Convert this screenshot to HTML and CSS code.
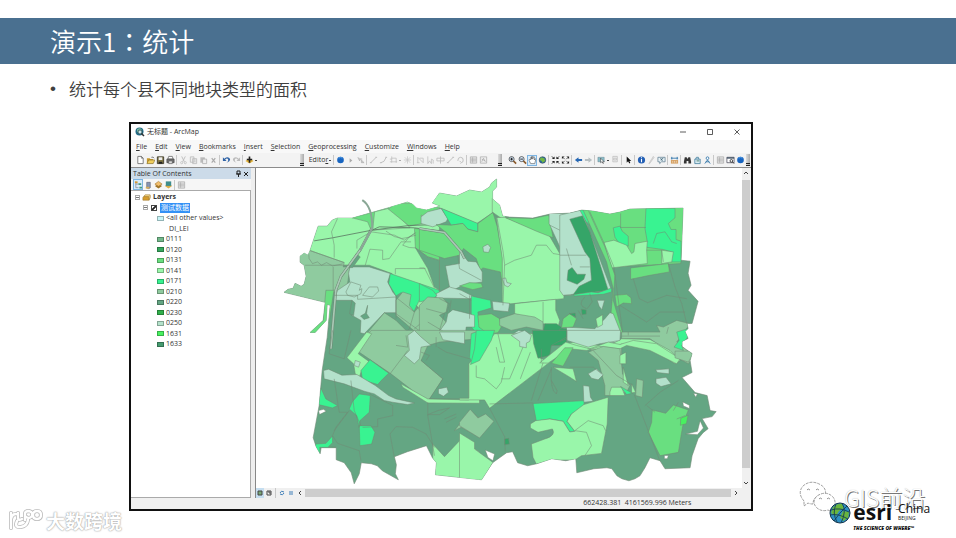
FILE: index.html
```html
<!DOCTYPE html>
<html lang="zh-CN">
<head>
<meta charset="utf-8">
<title>演示1：统计</title>
<link rel="stylesheet" href="styles.css">
</head>
<body>
<svg class="sprite" aria-hidden="true">
  <symbol id="page" viewBox="0 0 10 10"><path d="M2 1h4l2 2v6H2z" fill="#fff" stroke="#555" stroke-width=".8"/><path d="M6 1v2h2" fill="none" stroke="#555" stroke-width=".7"/></symbol>
  <symbol id="open" viewBox="0 0 10 10"><path d="M1 9V3h3l1 1h3v5z" fill="#c99a2c"/><path d="M1 9l2-4h7L8 9z" fill="#f0ce5d" stroke="#756229" stroke-width=".6"/><path d="M6 2q2-1 3 1" fill="none" stroke="#333" stroke-width=".7"/></symbol>
  <symbol id="save" viewBox="0 0 10 10"><path d="M1.5 1.5h7v7.5h-7z" fill="#817745" stroke="#3e3a2b"/><path d="M3 2h4v3H3z" fill="#eee"/><path d="M3 7h4v2H3z" fill="#222"/></symbol>
  <symbol id="print" viewBox="0 0 10 10"><path d="M3 1h4l1 3H2z" fill="#fff" stroke="#444" stroke-width=".7"/><path d="M1 4h8v4H1z" fill="#777" stroke="#333" stroke-width=".7"/><path d="M3 6h4v3H3z" fill="#ddd" stroke="#444" stroke-width=".6"/></symbol>
  <symbol id="cut" viewBox="0 0 10 10"><path d="M3 1l3 6M7 1L4 7" stroke="#bbb" fill="none"/><circle cx="3" cy="8" r="1.2" fill="none" stroke="#bbb" stroke-width=".8"/><circle cx="7" cy="8" r="1.2" fill="none" stroke="#bbb" stroke-width=".8"/></symbol>
  <symbol id="copy" viewBox="0 0 10 10"><path d="M1.500 1.500h4v6h-4zM4 3.500h4.500v5.500H4z" fill="#eee" stroke="#bbb" stroke-width=".9"/><path d="M5 5h3M5 7h3" stroke="#bbb" stroke-width=".6"/></symbol>
  <symbol id="paste" viewBox="0 0 10 10"><path d="M1.500 2h5v6h-5z" fill="#bbb"/><path d="M4 4h4.500v5H4z" fill="#eee" stroke="#aaa" stroke-width=".8"/></symbol>
  <symbol id="cross" viewBox="0 0 10 10"><path d="M3 3l4 5M7 3L3 8" stroke="#aaa" stroke-width="1.300"/></symbol>
  <symbol id="undo" viewBox="0 0 10 10"><path d="M1 2v4h4L3.500 4.500Q6 2 7 5q0 2-2 3 4-1 4-4Q7 0 2.500 3.500z" fill="#2e62a5"/></symbol>
  <symbol id="redo" viewBox="0 0 10 10"><path d="M9 2v4H5l1.500-1.500Q4 2 3 5q0 2 2 3-4-1-4-4Q3 0 7.500 3.500z" fill="#bbb"/></symbol>
  <symbol id="add" viewBox="0 0 10 10"><path d="M5 3l4.500 3L5 9 .5 6z" fill="#e7b639"/><path d="M5 1v7M2 4.500h6" stroke="#222" stroke-width="1.800"/></symbol>
  <symbol id="globe" viewBox="0 0 10 10"><circle cx="5" cy="5" r="3.700" fill="#1764c0"/><path d="M3 3q2-2 4 0" stroke="#5aa5ec" fill="none"/></symbol>
  <symbol id="earth" viewBox="0 0 10 10"><circle cx="5" cy="5" r="3.700" fill="#2c6aa3" stroke="#345" stroke-width=".6"/><path d="M3 2l4 1 1 3-3 2-1-2-2-1z" fill="#72b742"/></symbol>
  <symbol id="play" viewBox="0 0 10 10"><path d="M4 3l3 2.500L4 8z" fill="#aaa"/></symbol>
  <symbol id="vertex" viewBox="0 0 10 10"><path d="M2 2l2 4 1-2h2M6 5l3 3H6z" fill="#ccc" stroke="#aaa" stroke-width=".7"/></symbol>
  <symbol id="line" viewBox="0 0 10 10"><path d="M2 8l6-6M1 8h2M7 2h2" stroke="#bbb" fill="none"/></symbol>
  <symbol id="arc" viewBox="0 0 10 10"><path d="M2 8q4 0 6-6M1 8h2M7 2h2" stroke="#bbb" fill="none"/></symbol>
  <symbol id="trace" viewBox="0 0 10 10"><path d="M3 1v7M1 7h8M3 3h5v5M1 4h2" stroke="#bbb" fill="none" stroke-width=".8"/></symbol>
  <symbol id="star" viewBox="0 0 10 10"><path d="M5 1v8M1 5h8M2 2l6 6M8 2L2 8" stroke="#c5c5c5" stroke-width=".8"/></symbol>
  <symbol id="nodes" viewBox="0 0 10 10"><path d="M2 8V2l6 6V3H4M1 8h3" stroke="#bbb" fill="none" stroke-width=".8"/></symbol>
  <symbol id="bars" viewBox="0 0 10 10"><path d="M2 1v8l2-3 2 3V4l2 1v4" stroke="#bbb" fill="none" stroke-width=".8"/></symbol>
  <symbol id="split" viewBox="0 0 10 10"><path d="M5 1v8M1 3h8v3H1z" stroke="#bbb" fill="none" stroke-width=".9"/></symbol>
  <symbol id="turn" viewBox="0 0 10 10"><path d="M2 6q0-4 3-4t3 3-2 3M4 6l2 2-1 1" stroke="#bbb" fill="none"/></symbol>
  <symbol id="table" viewBox="0 0 10 10"><path d="M1.500 1.500h7v7h-7zM2 4h6M2 6h6M4 2v6" fill="#e3e3e3" stroke="#aaa" stroke-width=".8"/></symbol>
  <symbol id="sketch" viewBox="0 0 10 10"><path d="M1.500 1.500h7v7h-7zM3 7l2-4 2 4M3 4l4 2" fill="#eee" stroke="#aaa" stroke-width=".8"/></symbol>
  <symbol id="zin" viewBox="0 0 10 10"><path d="M6 6l3 3" stroke="#8b5a2b" stroke-width="1.800"/><circle cx="4" cy="4" r="2.800" fill="#def" stroke="#333" stroke-width=".8"/><path d="M2.500 4h3M4 2.500v3" stroke="#111"/></symbol>
  <symbol id="zout" viewBox="0 0 10 10"><path d="M6 6l3 3" stroke="#8b5a2b" stroke-width="1.800"/><circle cx="4" cy="4" r="2.800" fill="#def" stroke="#333" stroke-width=".8"/><path d="M2.500 4h3" stroke="#111"/></symbol>
  <symbol id="hand" viewBox="0 0 10 10"><path d="M3 9L1 5l1-1 1 1V2h1v2-3h1.200v3l.8-2.500h1V5l1-1.500.7.500L7.500 9z" fill="#fff" stroke="#444" stroke-width=".6"/></symbol>
  <symbol id="shrink" viewBox="0 0 10 10"><path d="M4 1v3H1zM6 1v3h3zM1 6h3v3zM6 9V6h3z" fill="#222"/><path d="M1 1l2 2M9 1L7 3M1 9l2-2M9 9L7 7" stroke="#222"/></symbol>
  <symbol id="expand" viewBox="0 0 10 10"><path d="M1 1h3L1 4zM9 1v3L6 1zM1 9V6l3 3zM9 9H6l3-3z" fill="#222"/><path d="M3 3l1 1M7 3L6 4M3 7l1-1M7 7L6 6" stroke="#222"/></symbol>
  <symbol id="back" viewBox="0 0 10 10"><path d="M1 5l4-3v2h4v2H5v2z" fill="#2768b4"/></symbol>
  <symbol id="fwd" viewBox="0 0 10 10"><path d="M9 5L5 2v2H1v2h4v2z" fill="#b7bfc2"/></symbol>
  <symbol id="select" viewBox="0 0 10 10"><path d="M1 2h7v5H1z" fill="#8bbfc9" stroke="#467" stroke-width=".4"/><path d="M4 3l4 4H6l1 2-2-2-1 1z" fill="#fff" stroke="#333" stroke-width=".6"/></symbol>
  <symbol id="clear" viewBox="0 0 10 10"><path d="M2 1h5v6H2zM3 3h3v2H3z" fill="#eee" stroke="#bbb" stroke-width=".8"/></symbol>
  <symbol id="arrow" viewBox="0 0 10 10"><path d="M3 1v7l1.500-1.500L6 9l1-1-1-2h2z" fill="#111"/></symbol>
  <symbol id="info" viewBox="0 0 10 10"><circle cx="5" cy="5" r="4" fill="#2460b5"/><path d="M5 4v3.500M5 2v1" stroke="#fff" stroke-width="1.200"/></symbol>
  <symbol id="pen" viewBox="0 0 10 10"><path d="M2 9l5-8 1 1-5 7z" fill="#ddd" stroke="#bbb" stroke-width=".6"/></symbol>
  <symbol id="popup" viewBox="0 0 10 10"><path d="M1 2h8v5H5L3 9V7H1z" fill="#e6f1f6" stroke="#5c7b8d" stroke-width=".8"/><path d="M4 5l3-2M4 3l2 3" stroke="#467"/></symbol>
  <symbol id="measure" viewBox="0 0 10 10"><path d="M1 5h8v4H1z" fill="#d6a264"/><path d="M1 3h8M2 1.500v3M8 1.500v3" stroke="#3478ae"/><path d="M3 6v2M5 6v2M7 6v2" stroke="#fff" stroke-width=".5"/></symbol>
  <symbol id="find" viewBox="0 0 10 10"><path d="M2 2h2l1 2 1-2h2l1 5v2H6V6H4v3H1V7z" fill="#343434"/></symbol>
  <symbol id="route" viewBox="0 0 10 10"><path d="M2 4h6v5H2zM3 4q0-3 3-2v2" fill="#d9ecf2" stroke="#467f9e" stroke-width=".9"/><path d="M4 6h3" stroke="#476"/></symbol>
  <symbol id="xy" viewBox="0 0 10 10"><circle cx="5" cy="3" r="1.500" fill="#fff" stroke="#397aad"/><path d="M2 9l3-4 3 4M3 7h4" fill="none" stroke="#397aad"/></symbol>
  <symbol id="viewer" viewBox="0 0 10 10"><path d="M1 2h8v6H1z" fill="#fff" stroke="#445" stroke-width=".8"/><path d="M1 2h8v1.500H1z" fill="#456"/><circle cx="6" cy="6" r="1.500" fill="none" stroke="#333"/><path d="M7 7l2 2" stroke="#333"/></symbol>
  <symbol id="layers" viewBox="0 0 10 10"><path d="M5 4l4 2-4 3-4-3z" fill="#9f7326"/><path d="M5 1l4 3-4 2.500L1 4z" fill="#f3bf6d" stroke="#a77930" stroke-width=".7"/></symbol>
  <symbol id="frame" viewBox="0 0 10 10"><path d="M1 5l2-2h6L8 8H1z" fill="#d79d2c" stroke="#97712b" stroke-width=".6"/><path d="M2 4l1.500-2H9v4L7.500 7V4z" fill="#f6d98a" stroke="#97712b" stroke-width=".6"/></symbol>
  <symbol id="tree" viewBox="0 0 10 10"><path d="M2 1v7h3M2 4h3" fill="none" stroke="#778" stroke-width=".7"/><path d="M1 1h3v2H1z" fill="#d79a34"/><path d="M5 3h3v2H5zM6 7h3v2H6z" fill="#479b80"/></symbol>
  <symbol id="drum" viewBox="0 0 10 10"><path d="M3 2h4v6q-2 2-4 0z" fill="#8796b4" stroke="#556" stroke-width=".6"/><path d="M2 7h4v2H2z" fill="#d7ad59"/></symbol>
  <symbol id="visible" viewBox="0 0 10 10"><path d="M5 3l4 3-4 3-4-3z" fill="#dcae48"/><path d="M2 1h6v5H2z" fill="#3e8d8d"/></symbol>
</svg>

<header class="banner"><h1>演示1<span class="colon" lang="zh-TW">：</span>统计</h1></header>
<ul class="points"><li>统计每个县不同地块类型的面积</li></ul>

<main class="stage">
  <div class="watermark">
    <svg viewBox="0 0 36 24" class="mark" aria-hidden="true"><g fill="none" stroke-linecap="round"><path d="M3 4v15M3 10q1-5 5-5M10 4v5q0 3 4 1M9 12q-3 7 4 6 6-1 7-7M17 11V5q0-3 4-3 4 1 3 5-3 4-7 0M25 6q0-4 4-4t4 4-4 4-4-4" stroke="#bbb" stroke-width="4"/><path d="M3 4v15M3 10q1-5 5-5M10 4v5q0 3 4 1M9 12q-3 7 4 6 6-1 7-7M17 11V5q0-3 4-3 4 1 3 5-3 4-7 0M25 6q0-4 4-4t4 4-4 4-4-4" stroke="#fff" stroke-width="2.400"/></g></svg>
    <span>大数跨境</span>
  </div>

  <section class="window">
    <div class="titlebar">
      <svg class="app" viewBox="0 0 10 10" aria-hidden="true"><circle cx="4.500" cy="4.500" r="4" fill="#246b87"/><path d="M2 2l3-1 2 2-2 3-3-1z" fill="#72b39c"/><circle cx="5" cy="5" r="2" fill="#cfe8ee" stroke="#244" stroke-width=".7"/><path d="M6.500 6.500L9 9" stroke="#333" stroke-width="1.500"/></svg>
      <span>无标题 - ArcMap</span>
      <div class="controls">
        <button aria-label="Minimize"><svg viewBox="0 0 8 8"><path d="M1 4h6" /></svg></button>
        <button aria-label="Maximize"><svg viewBox="0 0 8 8"><path d="M1.500 1.500h5v5h-5z"/></svg></button>
        <button aria-label="Close"><svg viewBox="0 0 8 8"><path d="M1.500 1.500l5 5M6.500 1.500l-5 5"/></svg></button>
      </div>
    </div>
    <nav class="menu">
      <button><u>F</u>ile</button><button><u>E</u>dit</button><button><u>V</u>iew</button><button><u>B</u>ookmarks</button><button><u>I</u>nsert</button><button><u>S</u>election</button><button><u>G</u>eoprocessing</button><button><u>C</u>ustomize</button><button><u>W</u>indows</button><button><u>H</u>elp</button>
    </nav>
    <div class="toolbars">
      <div class="bar">
        <button aria-label="New"><svg><use href="#page"/></svg></button><button aria-label="Open"><svg><use href="#open"/></svg></button><button aria-label="Save"><svg><use href="#save"/></svg></button><button aria-label="Print"><svg><use href="#print"/></svg></button><i></i>
        <button aria-label="Cut"><svg><use href="#cut"/></svg></button><button aria-label="Copy"><svg><use href="#copy"/></svg></button><button aria-label="Paste"><svg><use href="#paste"/></svg></button><button aria-label="Delete"><svg><use href="#cross"/></svg></button><i></i>
        <button aria-label="Undo"><svg><use href="#undo"/></svg></button><button aria-label="Redo"><svg><use href="#redo"/></svg></button><i></i>
        <button aria-label="Add data"><svg><use href="#add"/></svg></button><b class="drop"></b><b class="grip"></b>
      </div>
      <div class="bar">
        <button class="wide">Edito<u>r</u></button><b class="drop"></b><i></i>
        <button aria-label="Snap"><svg><use href="#globe"/></svg></button><button aria-label="Edit tool"><svg><use href="#play"/></svg></button><button aria-label="Vertex"><svg><use href="#vertex"/></svg></button><i></i>
        <button aria-label="Straight"><svg><use href="#line"/></svg></button><button aria-label="Arc"><svg><use href="#arc"/></svg></button><button aria-label="Trace"><svg><use href="#trace"/></svg></button><b class="drop pale"></b><button aria-label="Point"><svg><use href="#star"/></svg></button><i></i>
        <button aria-label="Nodes"><svg><use href="#nodes"/></svg></button><button aria-label="Reshape"><svg><use href="#bars"/></svg></button><button aria-label="Cut polygon"><svg><use href="#split"/></svg></button><button aria-label="Split"><svg><use href="#line"/></svg></button><button aria-label="Rotate"><svg><use href="#turn"/></svg></button><i></i>
        <button aria-label="Attributes"><svg><use href="#table"/></svg></button><button aria-label="Sketch"><svg><use href="#sketch"/></svg></button><b class="grip"></b>
      </div>
      <div class="bar">
        <button aria-label="Zoom in"><svg><use href="#zin"/></svg></button><button aria-label="Zoom out"><svg><use href="#zout"/></svg></button><button class="on" aria-label="Pan"><svg><use href="#hand"/></svg></button><button aria-label="Full extent"><svg><use href="#earth"/></svg></button><i></i>
        <button aria-label="Fixed zoom in"><svg><use href="#shrink"/></svg></button><button aria-label="Fixed zoom out"><svg><use href="#expand"/></svg></button><i></i>
        <button aria-label="Back"><svg><use href="#back"/></svg></button><button aria-label="Forward"><svg><use href="#fwd"/></svg></button><i></i>
        <button aria-label="Select features"><svg><use href="#select"/></svg></button><b class="drop"></b><button aria-label="Clear"><svg><use href="#clear"/></svg></button><i></i>
        <button aria-label="Select"><svg><use href="#arrow"/></svg></button><i></i>
        <button aria-label="Identify"><svg><use href="#info"/></svg></button><button aria-label="Hyperlink"><svg><use href="#pen"/></svg></button><button aria-label="Popup"><svg><use href="#popup"/></svg></button><i></i>
        <button aria-label="Measure"><svg><use href="#measure"/></svg></button><i></i>
        <button aria-label="Find"><svg><use href="#find"/></svg></button><button aria-label="Find route"><svg><use href="#route"/></svg></button><button aria-label="Go to XY"><svg><use href="#xy"/></svg></button><i></i>
        <button aria-label="Time"><svg><use href="#table"/></svg></button><button aria-label="Viewer"><svg><use href="#viewer"/></svg></button><button aria-label="Online"><svg><use href="#globe"/></svg></button><b class="grip"></b>
      </div>
    </div>
    <div class="work">
      <aside class="toc">
        <div class="tochead"><span>Table Of Contents</span><button aria-label="Pin"><svg viewBox="0 0 8 8"><path d="M3 1v3h3V1zM2 4h5M4.500 4v3"/></svg></button><button aria-label="Close panel"><svg viewBox="0 0 8 8"><path d="M2 2l4 4M6 2L2 6"/></svg></button></div>
        <div class="bar toctools"><button class="on" aria-label="By drawing order"><svg><use href="#tree"/></svg></button><button aria-label="By source"><svg><use href="#drum"/></svg></button><button aria-label="By visibility"><svg><use href="#layers"/></svg></button><button aria-label="By selection"><svg><use href="#visible"/></svg></button><i></i><button aria-label="Options"><svg><use href="#table"/></svg></button></div>
        <ul class="tree">
          <li><b class="fold"></b><svg class="ico"><use href="#frame"/></svg><strong>Layers</strong></li>
          <li class="l1"><b class="fold"></b><label><input type="checkbox" checked><mark>测试数据</mark></label></li>
          <li class="l2"><b class="sw other"></b>&lt;all other values&gt;</li>
          <li class="l2 field">DI_LEI</li>
          <li class="l2"><b class="sw c0111"></b>0111</li>
          <li class="l2"><b class="sw c0120"></b>0120</li>
          <li class="l2"><b class="sw c0131"></b>0131</li>
          <li class="l2"><b class="sw c0141"></b>0141</li>
          <li class="l2"><b class="sw c0171"></b>0171</li>
          <li class="l2"><b class="sw c0210"></b>0210</li>
          <li class="l2"><b class="sw c0220"></b>0220</li>
          <li class="l2"><b class="sw c0230"></b>0230</li>
          <li class="l2"><b class="sw c0250"></b>0250</li>
          <li class="l2"><b class="sw c1631"></b>1631</li>
          <li class="l2"><b class="sw c1633"></b>1633</li>
        </ul>
      </aside>
      <div class="view">
        <svg class="map" viewBox="257 168 485 319" role="img" aria-label="Layers">
          <defs><path id="extent" d="M285 292L289 289 294 288 296 283 302 286 305 284 307 276 305 265 301 262 301 256 305 253 309 255 311 250 319 226 328 226 333 220 338 218 353 218 388 208 408 202 413 204 417 208 427 210 441 206 433 203 440 193 457 196 470 190 482 192 490 187 492 183 497 179 497 187 493 191 493 199 500 205 503 216 510 217 533 218 550 214 570 213 582 210 593 211 610 214 620 212 630 209 683 208 681 260 690 261 688 273 691 285 688 290 698 301 692 323 687 323 688 328 685 331 688 338 682 341 682 346 686 349 692 353 690 360 692 372 682 377 695 392 707 395 710 410 716 411 712 416 702 418 708 428 703 432 698 438 692 455 690 467 665 468 660 460 650 457 645 467 640 475 635 478 629 480 622 478 617 475 612 468 607 467 594 468 577 472 576 458 566 460 552 458 537 463 528 465 518 462 513 451 507 452 493 462 482 479 436 474 437 462 433 457 427 445 408 451 395 456 397 464 396 473 399 479 383 470 378 465 372 463 362 462 360 473 355 483 352 472 345 462 337 459 337 447 322 447 321 453 317 446 314 437 320 405 323 370 328 337 331 305 328 304 327 320 316 332 311 332 324 320 326 302z"/><clipPath id="edge"><use href="#extent"/></clipPath></defs>
          <use href="#extent" class="k220"/>
          <g clip-path="url(#edge)">
          <g transform="translate(280 175) scale(.33333)">
            <path class="k141" d="M50 60h430v420L338 295 270 270H78L50 220z"/>
            <path class="k131" d="M218 128L327 100v60L275 164L265 140z"/>
            <path class="k141" d="M286 110L327 100Q365 125 392 158L280 165z"/>
            <path class="k131" d="M327 102L350 85H480V135L425 120 430 145 390 153z"/>
            <path class="k210" d="M90 225L195 262 192 275 212 275 205 325 180 350 165 350 138 385 0 385V200z"/>
            <path class="k250" d="M212 275H270L333 295 325 320 340 350 350 362V412L315 412 255 475 243 472 245 435 218 420V375L165 375 175 345 212 320 208 295z"/>
            <path class="k171" d="M333 295L480 345V362L445 375 423 368 403 410 385 400 390 365 365 352 350 362 328 325z"/>
            <path class="k131" d="M140 345H164L150 440 95 490 80 475 132 435z"/>
            <path class="k131" d="M405 160L480 166V255L445 245 408 218z"/>
            <path class="k220" d="M408 218L445 245 480 256V345L465 335 445 280z"/>
            <path class="k220" d="M231 235l12 10-23 32h-10z"/>
            <path class="k210" d="M315 412L350 435 400 485 480 500V510H240L262 475z"/>
            <path class="k210" d="M350 375L370 350 395 358 390 390 405 410 440 370 480 378V480L455 500 420 480 350 420z"/>
            <path class="road" d="M278 159L243 224L185 304L170 344L155 520"/>
            <path class="lane" d="M278 159L243 224L185 304L170 344L155 520"/>
            <path class="ln dark" d="M105 197L160 188L278 165L390 151L480 148M278 165L300 155L405 158L480 168"/>
            <path class="ln" d="M175 130L157 170L165 210V247M90 225L195 262M78 270H212M162 275V345M258 270L272 222L310 225V253L330 250L365 200H395M320 168Q370 210 410 172M410 180L390 185L370 210Q390 220 408 218M233 220V195L275 170L345 180L375 195L405 175M348 297V280H438M88 230L90 250L100 265L115 260L127 270L142 262L160 272L190 266M200 350L215 320L245 330L240 345L248 340L245 355L225 365L205 360zM250 360L270 335H295L298 347L280 365zM165 360H235V372L350 365M350 362V430M355 370L405 410L390 460L370 480L430 510M410 390L440 430L405 460M440 440L480 420M350 415L480 510M360 480L330 510"/>
            <path class="k220" d="M218 375l10 8-5 38-12-6zM265 390l-3 25 8 12-16 5-10-10 14-8z"/>
            <path class="k141" d="M262 470l-5 15-20 20-5 8h20z"/>
          </g>
          <g transform="translate(420 175) scale(.33333)">
            <path class="k141" d="M30 60L210 0H240L260 140L220 112 172 145 60 98 20 95z"/>
            <path class="k250" d="M5 125L25 110 65 100 85 130 80 140 40 155 5 145z"/>
            <path class="k171" d="M66 100L175 145V170L145 162 130 145 95 150z"/>
            <path class="k131" d="M0 163L75 168 50 148 95 150 130 145 145 162 175 170V145L220 112 233 155 250 250V340L242 290 190 278 182 285 170 250 132 220 120 240 75 250 0 225z"/>
            <path class="k141" d="M230 127H258L388 180 420 235 440 280 432 370 248 388V250z"/>
            <path class="k131" d="M258 128L340 130 388 120 400 188 350 168z"/>
            <path class="k250" d="M388 115H455V360H432L440 280 418 210 388 145z"/>
            <path class="k250" d="M120 225L145 258 170 260 188 290V320L130 330 100 345 60 350 90 335 78 272 120 265zM190 215l15-8 8 10-6 15-15-2zM248 310L258 308 262 322 275 325 265 335 255 330z"/>
            <path class="k131" d="M120 332l30-10 35 2 5 12-30 7z"/>
            <path class="k250" d="M50 355L90 335 125 345 165 365 150 370 50 368z"/>
            <path class="k171" d="M0 325L40 345 52 360 42 370 0 380zM155 362L213 375 215 398 175 410 178 440 210 470 230 475 220 510H180L178 480 155 455z"/>
            <path class="k210" d="M0 390L25 365 70 368 85 385 80 410 60 420 80 440 40 500 0 465z"/>
            <path class="k250" d="M85 415L100 403 148 415 165 420V455L140 455 135 500 60 490 58 470 80 440z"/>
            <path class="k131" d="M175 420L215 415 240 430 245 455 235 472 205 475 178 455z"/>
            <path class="k250" d="M218 378l52 6-4 25-45-4z"/>
            <path class="k141" d="M285 385L408 372V405L420 435 415 455 370 445 285 415z"/>
            <path class="k210" d="M240 430L285 415 345 425 370 440V465L320 455 275 465 240 450z"/>
            <path class="k120" d="M345 485L370 470 375 445 410 445 440 465V510H340z"/>
            <path class="k131" d="M425 440L450 415V460z"/>
            <path class="k120" d="M440 290h10v25l-10-5z"/>
            <path class="k141" d="M230 475H345V510H220z"/>
            <path class="k250" d="M272 480L297 465 322 470 337 490 317 510H295z"/>
            <path class="road" d="M0 160L75 172L125 230L135 250"/><path class="lane" d="M0 160L75 172L125 230L135 250"/>
            <path class="ln" d="M218 70V112L232 127L250 227L255 267L250 390M255 270L285 255L335 240L350 210H380L400 235L432 240M370 380V440M390 150L420 165H440V145H450M0 278H15L45 338M115 240L120 280L185 315M60 370L90 385L82 415M20 400L75 415L50 500M25 440L75 470M150 360V430M120 355L155 375M95 375L90 410"/>
          </g>
          <g transform="translate(560 195) scale(.33333)">
            <path class="k250" d="M0 60L65 45 155 285 10 300 0 285z"/>
            <path class="k131" d="M70 30H380L362 205 155 215z"/>
            <path class="k171" d="M60 45H78L90 90 78 78zM258 40H345V68L325 85 333 103H348V133L363 138V200H330L335 170 310 163 250 155 262 140 255 100zM160 98L180 93 187 108 205 123V153L180 148 165 126z"/>
            <path class="k141" d="M132 142L162 135 200 150 215 175 222 170 225 145 262 138 260 165 262 205 155 218zM305 165L340 170 335 200 305 205z"/>
            <path class="k120" d="M30 72L68 62 90 110 145 285 40 298 58 273 95 255 90 190 75 170z"/>
            <path class="k120" d="M25 225L37 217 52 237 77 237 72 252 52 267 22 255z"/>
            <path class="k131" d="M70 45H85L135 155 165 240 160 315 188 412H148L160 280 140 200z"/>
            <path class="k131" d="M212 218L325 205 328 230 270 240 212 252zM165 300L200 297 213 307 215 325 190 323 170 335z"/>
            <path class="k171" d="M40 298L95 290 115 292 155 278V290L130 297 45 302z"/>
            <path class="k250" d="M20 395L105 400 135 370 150 352 160 355 180 405V440L125 445 90 432 60 445 20 430zM112 315h22l-8 28-8-10z"/>
            <path class="k131" d="M10 370L30 355 50 370 40 395 5 397zM0 460L25 455 20 485 0 510z"/>
            <path class="k141" d="M108 370l20-12v30l-15 8z"/>
            <path class="k120" d="M0 400h20v30l-20 8zM28 355l18-2 2 12zM65 342l14 2 0 12-12 2z"/>
            <path class="k210" d="M185 410H300L290 390 310 395 350 375 390 385 350 440 400 480 385 505 340 480 270 430 185 430z"/>
            <path class="k171" d="M350 410L383 400V425L365 450 370 465 342 455 357 435z"/>
            <path class="k210" d="M90 460L185 450V510H130z"/>
            <path class="k141" d="M0 452L40 440 90 445 140 455 185 430 270 432 330 465 360 495 345 505 290 470 220 448 185 446 145 465 90 460 40 458 0 475z"/>
            <path class="ln" d="M90 50L132 142L162 215L188 410M182 55V97H258M325 205L345 275L365 325L380 385M220 250L238 310L263 322L320 300L380 310M180 330L260 380L300 350L375 350M55 345L70 370M75 305Q50 330 80 340M90 295L97 320L82 340M205 410V420M260 165H305L310 200M280 145L290 115L315 110L335 140L350 145M0 180H80M60 215H90M20 160L35 210M185 422H300M325 395L320 415"/>
          </g>
          <g transform="translate(280 330) scale(.33333)">
            <path class="k210" d="M235 62L275 0H595V25L475 50 425 90 490 145 445 215 335 130z"/>
            <path class="k220" d="M445 45L480 35 600 25V85L570 105V205L450 205 490 145 425 90z"/>
            <path class="k141" d="M262 5L277 10 237 70 272 95 247 120 240 140 228 130 223 100 203 82zM365 160L445 205 568 208V105L600 70V218L445 217 370 170z"/>
            <path class="k171" d="M272 88L328 128 308 148 295 162 250 148 245 120zM240 190L273 195 270 245 242 270 240 290 232 255 210 235 220 213zM240 285L275 285 287 305 277 340 242 345zM125 172L140 205 175 225 160 232 118 222zM110 340L140 338 160 316V336L148 348 170 350H122V370L105 365z"/>
            <path class="k250" d="M133 120L148 116 188 134 233 132 288 165 328 195 350 205 405 217 385 222 340 215 315 210 285 190 255 182 195 160 135 145zM477 175l25-5 5 15-15 12-15-8zM480 5H555V40L490 28zM385 15L405 0 425 20 455 45 425 50 420 85 405 100 375 75 390 60zM228 90l15 5-5 15-13-5z"/>
            <path class="hole" d="M118 240l15-4 8 6-20 10z"/>
            <path class="k171" d="M575 10L600 0V85L580 105 570 80z"/>
            <path class="k210" d="M525 300L572 238 600 265V320L545 290z"/>
            <path class="k141" d="M460 340L495 378 545 325 600 365V450H460z"/>
            <path class="ln" d="M160 0L150 70L195 85L215 0M165 145L180 245H205L170 290L160 315L175 338L240 360L245 390M245 285L225 240L215 150M270 190L340 225V255L295 265V288L250 290M332 130L385 60M445 215V255L465 375M345 380L332 310L350 288L400 290L440 310L465 350M425 65L450 75L440 90M350 45L385 50L380 15M475 50L500 65L570 85M445 252L475 240L510 232L480 252H445M495 265L530 250M500 275L530 260M470 50V20M210 240L165 300"/>
          </g>
          <g transform="translate(460 330) scale(.33333)">
            <path class="k141" d="M28 100L105 10H225L235 80 270 95 90 233 75 208H0V203H28z"/>
            <path class="k171" d="M50 0H105L95 30 60 90 33 102 45 55z"/>
            <path class="k250" d="M155 15L195 0 215 15 210 33 200 38V52L180 48V33zM322 0H482L480 30 420 40 385 50 322 30z"/>
            <path class="k120" d="M218 0H320V20L275 45 270 75 235 83 222 40z"/>
            <path class="k141" d="M240 97L318 35 350 45 390 55 445 35 480 42 520 30 590 40 660 85 650 100 570 60 500 45 480 55 420 48 380 60 330 55 265 98z"/>
            <path class="k131" d="M275 98L315 52 340 52 310 107z"/>
            <path class="k210" d="M385 65L430 48 480 55 488 130 510 165 500 185 450 195 435 195V165L415 90zM530 145l20 5-3 50-20-5zM645 62H690L697 72 685 95 645 82z"/>
            <path class="k141" d="M280 110L340 115 350 153 330 140zM450 185L455 170 485 170 495 195H450zM480 75l18-10v35h-18zM490 110L505 165 490 155zM515 160l12 25-12 2z"/>
            <path class="k171" d="M482 168L517 188 500 192zM220 219L375 210 370 230 335 250 322 272 345 302 330 304 310 272 270 265 230 272z"/>
            <path class="k250" d="M370 165L388 167 392 200 400 212 372 215zM385 130L410 115 430 133 415 148 395 143zM587 118L627 115V130L592 126zM588 145L618 140 633 160 603 168 588 158z"/>
            <path class="k141" d="M335 250L372 222 445 200 442 280 425 368 365 375 345 388H275L230 400 220 380 215 340 255 325Q290 315 278 295L235 305 212 292V280L228 270 270 265 310 272 330 304 345 302 322 272z"/>
            <path class="k131" d="M577 238L617 248 640 223 685 238 670 275 663 315 655 365 600 375 565 305 575 275z"/>
            <path class="k1631" d="M662 263l22-9-5 25-18 5z"/>
            <path class="k120" d="M135 325l12-2 2 17-14 2z"/>
            <path class="k210" d="M0 275L32 236 55 262 78 250 103 272 60 322 0 285z"/>
            <path class="k141" d="M0 307L45 335V355L100 395 65 455H0z"/>
            <path class="hole" d="M77 358L105 370 100 390 85 380zM668 214L688 224V234L670 226zM613 374H625L622 384H613zM720 270L712 302 677 310 712 312 730 292zM700 188l12 2-5 10z"/>
            <path class="ln" d="M90 233L135 318L137 362M90 220L220 217M245 95V55M110 50L120 95H135L115 10M190 50L150 145H125M212 65L182 145M250 97L215 210M275 110Q270 180 290 190L292 180L275 150M235 210L275 115M50 105V140L75 145L110 175L125 155L135 110M523 192L600 392M555 225L600 185L655 150M560 225L585 245M400 60L470 135L515 162M345 300L385 270L430 285L437 300M345 300L380 305L395 345L375 375M640 240L655 215M650 265L675 255M330 110H400L425 130"/>
          </g>
          </g>
          <path class="spur" d="M363 200Q373 206 373 228L361 250"/>
        </svg>
        <div class="vscroll"><button aria-label="Scroll up"><svg viewBox="0 0 8 8"><path d="M2 5l2-2 2 2"/></svg></button><span class="vthumb"></span><button aria-label="Scroll down"><svg viewBox="0 0 8 8"><path d="M2 3l2 2 2-2"/></svg></button></div>
        <div class="hscroll"><button class="on" aria-label="Data view"><svg viewBox="0 0 8 8"><path d="M2 2h4v4H2z" fill="#78a875"/></svg></button><button aria-label="Layout view"><svg viewBox="0 0 8 8"><path d="M2 2h4v4H2zM4 2v2h2"/></svg></button><i></i><button aria-label="Refresh"><svg viewBox="0 0 8 8"><path class="blue" d="M2 4q1-3 4-1M6 4q-1 3-4 1"/></svg></button><button aria-label="Pause"><svg viewBox="0 0 8 8"><path class="blue" d="M2 3h4M2 5h4"/></svg></button><button aria-label="Scroll left"><svg viewBox="0 0 8 8"><path d="M5 2L3 4l2 2"/></svg></button><span class="hthumb"></span><button aria-label="Scroll right"><svg viewBox="0 0 8 8"><path d="M3 2l2 2-2 2"/></svg></button></div>
      </div>
    </div>
    <footer class="status">662428.381&nbsp; 4161569.996 Meters</footer>
  </section>

  <div class="brand">
    <div class="account">
      <svg viewBox="0 0 38 32" aria-hidden="true"><g fill="#fff" stroke="#888" stroke-width=".8" stroke-dasharray="3 1"><path d="M5 20Q-2 12 4 5q8-7 18-1 6 4 4 10-12 0-12 9-3 0-5-1l-4 3z"/><path d="M32 28q7-5 2-12-7-7-16-1-6 6 0 12 5 4 11 2l4 2z"/></g><path d="M8 9q1-2 3 0M17 9q1-2 3 0M20 18q1-2 3 0M28 18q1-2 3 0" fill="none" stroke="#777" stroke-width=".8"/></svg>
      <span>GIS前沿</span>
    </div>
    <div class="logo">
      <svg viewBox="0 0 22 22" aria-hidden="true"><circle cx="11" cy="11" r="10" fill="#2d8fc4" stroke="#15344b"/><path d="M4 5q5-4 9-3l2 4-5 3-3 5-5-3zM14 9l6 1-1 6-5 3-3-4z" fill="#69b53c"/><path d="M2 8q9-3 18 2M1 13q8-2 18 4M7 2q-4 9 1 18M13 1q5 8-1 20M18 4q-8 7-13 15" fill="none" stroke="#153f55" stroke-width=".9"/></svg>
      <div class="names"><div class="pair"><strong>esri</strong><span class="region">China<small>BEIJING</small></span></div><em>THE SCIENCE OF WHERE™</em></div>
    </div>
  </div>
</main>
</body>
</html>
```
FILE: styles.css
```css
* { box-sizing: border-box; }
body { margin: 0; padding-top: 18px; background: #fff; color: #404040; font-family: "Open Sans", "Noto Sans CJK SC", sans-serif; }
.sprite { display: none; }
button { border: 0; padding: 0; margin: 0; background: none; color: inherit; font: inherit; }
ul { list-style: none; margin: 0; padding: 0; }

.banner { height: 46px; padding-left: 50px; background: #4a7090; color: #fff; }
.banner h1 { margin: 0; font: 350 26px/46px "Noto Sans CJK SC", sans-serif; }
.colon { font-family: "Noto Sans CJK TC", sans-serif; }
.points { padding: 10px 0 0 50px; height: 58px; }
.points li { display: flex; font: 350 17px/30px "Noto Sans CJK SC", sans-serif; }
.points li::before { content: "•"; width: 19px; font: 17px/30px "Liberation Sans", sans-serif; }

.stage { display: grid; grid-template-columns: 13.5% 65.3% 1fr; }
.window { margin-bottom: 22px; border: 2px solid #111; background: #f0f0f0; color: #333; font-size: 7px; line-height: 10px; }

.titlebar { display: flex; align-items: center; height: 16px; padding-left: 4px; gap: 2px; background: #fff; }
.titlebar svg { display: block; }
.app { width: 10px; height: 10px; }
.controls { display: flex; margin-left: auto; gap: 19px; padding-right: 10px; }
.controls svg { width: 8px; height: 8px; fill: none; stroke: #333; stroke-width: .8; }
.menu { display: flex; gap: 8px; height: 13px; padding: 1px 5px; background: #f8f8f8; line-height: 11px; }
.menu u, .wide u { text-decoration-thickness: 1px; text-underline-offset: 1px; }

.toolbars { display: grid; grid-template-columns: 28% 32% 40%; height: 15px; border-bottom: 1px solid #8b8b8b; background: #f3f3f3; }
.bar { display: flex; align-items: center; padding-left: 4px; }
.bar button { flex: 0 0 10px; height: 11px; }
.bar button.wide { flex: 0 0 auto; }
.bar button svg { display: block; width: 9px; height: 10px; margin: auto; }
.bar button.on { background: #d9ecfa; outline: 1px solid #7eb5e2; outline-offset: -1px; }
.bar i, .hscroll i { flex: 0 0 1px; height: 10px; margin: 0 1px; background: #c8c8c8; }
.drop { flex: 0 0 2px; height: 1px; margin: 0 1px; background: #444; }
.pale { background: #aaa; }
.grip { flex: 0 0 4px; height: 12px; margin-left: auto; margin-right: 1px; border-bottom: 3px double #222; background: linear-gradient(90deg, #ddd, #aaa); }

.work { display: grid; grid-template-columns: 20% 1fr; }
.toc { display: flex; flex-direction: column; border-right: 4px solid #eee; }
.tochead { display: flex; align-items: center; height: 11px; padding: 0 1px 0 2px; background: #ccdbe9; }
.tochead span { flex: 1; }
.tochead svg { display: block; width: 8px; height: 8px; fill: none; stroke: #222; }
.toctools { height: 12px; padding-left: 2px; border-bottom: 1px solid #aaa; background: #f6f6f6; }
.tree { flex: 1; padding: 1px 4px; border: solid #aaa; border-width: 0 1px 1px 0; background: #fff; }
.tree li { display: flex; align-items: center; gap: 2px; height: 10px; line-height: 10px; }
.tree li:nth-child(even) { height: 11px; }
.tree .l1 { padding-left: 8px; }
.tree .l2 { padding-left: 22px; }
.tree .field { padding-left: 34px; }
.tree label { display: flex; align-items: center; gap: 2px; }
.tree input { appearance: none; width: 6px; height: 6px; margin: 0 1px; border: 1px solid #444; background: linear-gradient(135deg, #fff 30%, #222 40%, #222 60%, #fff 70%); }
.tree mark { background: #3390f5; color: #fff; padding: 0 1px; }
.fold { width: 5px; height: 5px; border: 1px solid #aaa; background: linear-gradient(#fff 1px, #777 1px 2px, #fff 2px); }
.ico { width: 9px; height: 9px; }
.sw { width: 7px; height: 5px; border: 1px solid #0004; }
.other { background: #c7f4f7; }
.c0111 { background: #72b98a; } .c0120 { background: #35a75c; } .c0131 { background: #69df7f; }
.c0141 { background: #99f6aa; } .c0171 { background: #37f290; } .c0210 { background: #8fca9e; }
.c0220 { background: #64a683; } .c0230 { background: #31b04b; } .c0250 { background: #b3e1ca; }
.c1631 { background: #48f160; } .c1633 { background: #459b6f; }

.view { display: grid; grid-template-columns: 1fr 9px; border-left: 1px solid #888; }
.map { display: block; width: 100%; background: #fff; }
.map path { stroke: #718a76; stroke-width: 1.6; stroke-linejoin: round; }
.map #extent { stroke-width: .6; }
.map .k220 { fill: #64a683; } .map .k120 { fill: #35a568; } .map .k131 { fill: #69df80; }
.map .k141 { fill: #99f6aa; } .map .k171 { fill: #39f391; } .map .k210 { fill: #8fcb9f; }
.map .k250 { fill: #b3e1cb; } .map .k1631 { fill: #48f160; }
.map .hole { fill: #fff; }
.map .ln { fill: none; }
.map .dark { stroke: #5a7561; stroke-width: 2.4; }
.map .road { fill: none; stroke: #6e8875; stroke-width: 8; }
.map .lane { fill: none; stroke: #a9c9b5; stroke-width: 5; }
.map .spur { fill: none; stroke: #8aa796; stroke-width: 2; }

.vscroll { display: flex; flex-direction: column; background: #f0f0f0; }
.vscroll svg, .hscroll svg { display: block; width: 8px; height: 10px; fill: none; stroke: #444; }
.vthumb { flex: 1; margin: 2px 1px 10px 0; background: #cdcdcd; }
.hscroll { grid-column: 1 / -1; display: flex; align-items: center; height: 10px; padding-right: 11px; gap: 1px; }
.hscroll .on { background: #c5def0; }
.hscroll .blue { stroke: #3e7eb8; }
.hthumb { flex: 1; height: 8px; background: #cdcdcd; }
.status { height: 11px; padding-right: 60px; text-align: right; }

.watermark { align-self: end; display: flex; align-items: center; gap: 2px; padding-left: 8px; color: #fff; }
.mark { width: 36px; height: 24px; }
.watermark span { font: 700 19px/24px "Noto Sans CJK SC", sans-serif; text-shadow: 0 0 1px #999, 0 0 2px #aaa; }

.brand { position: relative; align-self: end; padding-left: 76px; height: 31px; }
.account { position: absolute; left: 46px; top: -21px; display: flex; align-items: center; gap: 7px; color: #fff; }
.account svg { width: 38px; height: 32px; }
.account span { font: 300 23px/30px "Noto Sans CJK SC", sans-serif; text-shadow: 1px 1px 0 #777, 0 0 1px #aaa; }
.logo { position: relative; display: flex; gap: 2px; color: #111; }
.logo svg { width: 22px; height: 22px; }
.pair { display: flex; gap: 6px; height: 23px; }
.pair strong { font: 700 21px/21px "Open Sans", sans-serif; }
.region { font-size: 12px; line-height: 14px; }
.region small { display: block; font-size: 5px; line-height: 5px; }
.names em { display: block; font: italic 800 5px/6px "Open Sans", sans-serif; white-space: nowrap; }
```
